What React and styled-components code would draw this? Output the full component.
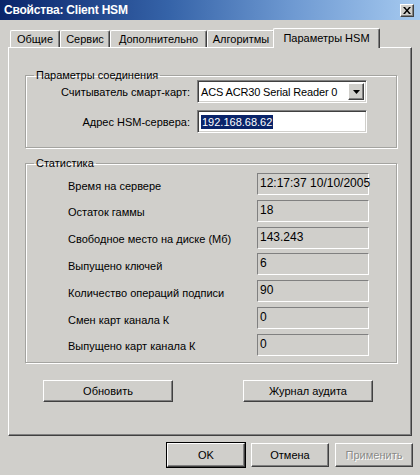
import React from "react";
import styled, { createGlobalStyle, css } from "styled-components";

const GlobalStyle = createGlobalStyle`
    html, body {
        margin: 0;
        padding: 0;
        background: #d0cfcb;
    }
    body {
        font-family: "Liberation Sans", Arial, sans-serif;
        font-size: 11px;
        color: #000;
    }
`;

const face = "#d0cfcb";

const raised = css`
    border: 1px solid;
    border-color: #ffffff #404040 #404040 #ffffff;
    box-shadow: inset -1px -1px #808080, inset 1px 1px ${face};
`;

const sunken = css`
    border: 1px solid;
    border-color: #808080 #ffffff #ffffff #808080;
    box-shadow: inset 1px 1px #404040, inset -1px -1px ${face};
`;

const Window = styled.div`
    width: 420px;
    height: 475px;
    overflow: hidden;
    display: flex;
    flex-direction: column;
    background: ${face};
`;

const TitleBar = styled.div`
    height: 20px;
    display: flex;
    align-items: center;
    justify-content: space-between;
    padding-left: 4px;
    background: linear-gradient(to right, #0a246a 0%, #3563a8 40%, #6f9ad2 70%, #a6caf0 100%);
`;

const Title = styled.span`
    color: #fff;
    font-weight: bold;
    font-size: 12px;
    letter-spacing: -0.2px;
`;

const CloseButton = styled.div`
    ${raised};
    width: 12px;
    height: 11px;
    margin-right: 6px;
    background: ${face};
    display: flex;
    align-items: center;
    justify-content: center;
    svg {
        display: block;
    }
`;

const TabsRow = styled.div`
    height: 27px;
    display: flex;
    align-items: flex-end;
    padding-left: 10px;
`;

const Tab = styled.div`
    position: relative;
    box-sizing: border-box;
    width: ${(p) => p.w}px;
    height: 17px;
    display: flex;
    align-items: center;
    justify-content: center;
    border-top: 1px solid #fff;
    border-left: 1px solid #fff;
    border-right: 1px solid #404040;
    box-shadow: inset -1px 0 #808080;
    border-radius: 2px 2px 0 0;
    white-space: nowrap;
    ${(p) =>
        p.active &&
        css`
            height: 20px;
            margin-left: -2px;
            margin-bottom: -1px;
            padding-bottom: 2px;
            background: ${face};
            z-index: 2;
        `}
`;

const Panel = styled.div`
    box-sizing: border-box;
    margin: 0 8px;
    height: 389px;
    border: 1px solid;
    border-color: #ffffff #404040 #404040 #ffffff;
    box-shadow: inset -1px -1px #808080;
    padding: 21px 14px 0 16px;
`;

const Group = styled.fieldset`
    margin: ${(p) => p.top || 0}px 0 0 0;
    padding: 0;
    width: 372px;
    box-sizing: border-box;
    border: 1px solid #a4a4a0;
    box-shadow: inset 1px 1px #fff, 1px 1px #fff;
    min-width: 0;
`;

const Legend = styled.legend`
    margin-left: 8px;
    padding: 0 2px;
    line-height: 12px;
`;

const ConnGrid = styled.div`
    display: grid;
    grid-template-columns: 164px 170px;
    grid-auto-rows: 23px;
    column-gap: 7px;
    row-gap: 7px;
    align-items: center;
    margin-top: -1px;
    padding-bottom: 14px;
`;

const RightLabel = styled.div`
    text-align: right;
    white-space: nowrap;
`;

const Combo = styled.div`
    ${sunken};
    box-sizing: border-box;
    height: 23px;
    background: #fff;
    display: flex;
    align-items: center;
    padding: 2px 2px 2px 3px;
    font-size: 11px;
    letter-spacing: -0.15px;
    white-space: nowrap;
`;

const ComboText = styled.span`
    flex: 1;
`;

const DropButton = styled.div`
    ${raised};
    box-sizing: border-box;
    flex: none;
    width: 16px;
    height: 17px;
    margin-left: 2px;
    background: ${face};
    display: flex;
    align-items: center;
    justify-content: center;
`;

const TextInput = styled.div`
    ${sunken};
    box-sizing: border-box;
    height: 23px;
    background: #fff;
    display: flex;
    align-items: center;
    padding: 0 3px;
`;

const Selected = styled.span`
    background: #0a246a;
    color: #fff;
    line-height: 14px;
    padding: 0 1px;
`;

const StatsGrid = styled.div`
    display: grid;
    grid-template-columns: 189px 112px;
    grid-auto-rows: 22px;
    row-gap: 4.83px;
    align-items: center;
    padding: 4px 0 6px 42px;
`;

const StatLabel = styled.div`
    white-space: nowrap;
    padding-top: 3px;
`;

const ValueBox = styled.div`
    box-sizing: border-box;
    height: 22px;
    border: 1px solid;
    border-color: #808080 #ffffff #ffffff #808080;
    padding: 2px 0 0 2px;
    font-size: 12px;
    white-space: nowrap;
`;

const ButtonRow = styled.div`
    display: flex;
    gap: ${(p) => p.gap}px;
    margin: ${(p) => p.top}px 0 0 ${(p) => p.left}px;
`;

const Button = styled.div`
    ${raised};
    box-sizing: border-box;
    width: ${(p) => p.w}px;
    height: ${(p) => p.h}px;
    display: flex;
    align-items: center;
    justify-content: center;
    white-space: nowrap;
    ${(p) =>
        p.primary &&
        css`
            outline: 1px solid #000;
        `}
    ${(p) =>
        p.disabled &&
        css`
            color: #8a8a88;
            text-shadow: 1px 1px #fff;
        `}
`;

const tabs = [
    { label: "Общие", w: 50 },
    { label: "Сервис", w: 50 },
    { label: "Дополнительно", w: 97 },
    { label: "Алгоритмы", w: 68 },
    { label: "Параметры HSM", w: 107, active: true },
];

const stats = [
    ["Время на сервере", "12:17:37 10/10/2005"],
    ["Остаток гаммы", "18"],
    ["Свободное место на диске (Мб)", "143.243"],
    ["Выпущено ключей", "6"],
    ["Количество операций подписи", "90"],
    ["Смен карт канала К", "0"],
    ["Выпущено карт канала К", "0"],
];

export default function App() {
    return (
        <>
            <GlobalStyle />
            <Window>
                <TitleBar>
                    <Title>Свойства: Client HSM</Title>
                    <CloseButton>
                        <svg width="8" height="7" viewBox="0 0 8 7">
                            <path d="M0 0h2l2 2.5L6 0h2L5 3.5 8 7H6L4 4.5 2 7H0l3-3.5z" fill="#000" />
                        </svg>
                    </CloseButton>
                </TitleBar>
                <TabsRow>
                    {tabs.map((t) => (
                        <Tab key={t.label} w={t.w} active={t.active}>
                            {t.label}
                        </Tab>
                    ))}
                </TabsRow>
                <Panel>
                    <Group>
                        <Legend>Параметры соединения</Legend>
                        <ConnGrid>
                            <RightLabel>Считыватель смарт-карт:</RightLabel>
                            <Combo>
                                <ComboText>ACS ACR30 Serial Reader 0</ComboText>
                                <DropButton>
                                    <svg width="7" height="4" viewBox="0 0 7 4">
                                        <path d="M0 0h7L3.5 4z" fill="#000" />
                                    </svg>
                                </DropButton>
                            </Combo>
                            <RightLabel>Адрес HSM-сервера:</RightLabel>
                            <TextInput>
                                <Selected>192.168.68.62</Selected>
                            </TextInput>
                        </ConnGrid>
                    </Group>
                    <Group top={9}>
                        <Legend>Статистика</Legend>
                        <StatsGrid>
                            {stats.map(([label, value]) => (
                                <React.Fragment key={label}>
                                    <StatLabel>{label}</StatLabel>
                                    <ValueBox>{value}</ValueBox>
                                </React.Fragment>
                            ))}
                        </StatsGrid>
                    </Group>
                    <ButtonRow top={17} left={18} gap={70}>
                        <Button w={130} h={22}>Обновить</Button>
                        <Button w={130} h={22}>Журнал аудита</Button>
                    </ButtonRow>
                </Panel>
                <ButtonRow top={7} left={167} gap={6}>
                    <Button w={78} h={24} primary>
                        OK
                    </Button>
                    <Button w={78} h={24}>Отмена</Button>
                    <Button w={78} h={24} disabled>
                        Применить
                    </Button>
                </ButtonRow>
            </Window>
        </>
    );
}
